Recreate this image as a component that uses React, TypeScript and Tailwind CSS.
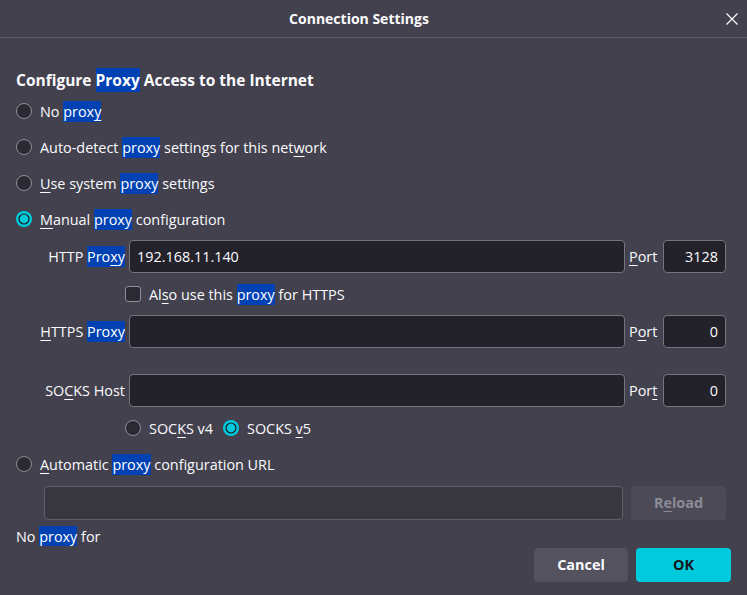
import React from 'react';

const ACCENT = '#00cadb';

function Hl({ children }: { children: React.ReactNode }) {
  return <span className="bg-[#0042b4] py-[1px] text-white">{children}</span>;
}

function Key({ children }: { children: React.ReactNode }) {
  return <span className="underline decoration-1 underline-offset-[3px]">{children}</span>;
}

function Radio({ checked }: { checked?: boolean }) {
  return (
    <svg width="16" height="16" viewBox="0 0 16 16" className="shrink-0">
      {checked ? (
        <>
          <circle cx="8" cy="8" r="8" fill={ACCENT} />
          <circle cx="8" cy="8" r="5.6" fill="#1c1b22" />
          <circle cx="8" cy="8" r="4.4" fill={ACCENT} />
        </>
      ) : (
        <circle cx="8" cy="8" r="7.5" fill="#2b2a33" stroke="#8f8f9d" strokeWidth="1" />
      )}
    </svg>
  );
}

function RadioRow({ checked, children }: { checked?: boolean; children: React.ReactNode }) {
  return (
    <div className="flex h-[36px] items-center gap-2">
      <Radio checked={checked} />
      <span className="pt-[2px]">{children}</span>
    </div>
  );
}

function TextBox({ value, className = '' }: { value?: string; className?: string }) {
  return (
    <div
      className={`flex h-[33px] items-center rounded-[4px] border border-[#74737e] bg-[#23222b] px-[7px] ${className}`}
    >
      {value}
    </div>
  );
}

function ProxyRow({
  label,
  value,
  port,
  portLabel,
}: {
  label: React.ReactNode;
  value?: string;
  port: string;
  portLabel: React.ReactNode;
}) {
  return (
    <div className="flex h-[33px] items-center">
      <div className="w-[113px] shrink-0 whitespace-nowrap pr-[4px] text-right">{label}</div>
      <TextBox value={value} className="flex-1" />
      <div className="w-[38px] shrink-0 pl-[4px]">{portLabel}</div>
      <TextBox value={port} className="w-[63px] shrink-0 justify-end" />
    </div>
  );
}

export default function App() {
  return (
    <div className="flex h-[595px] w-[747px] flex-col overflow-hidden bg-[#42414d] font-['Open_Sans','Noto_Sans',sans-serif] text-[14.4px] text-[#fbfbfe]">
      <div className="flex h-[38px] shrink-0 items-center border-b border-[#5e5d69]">
        <div className="flex-1 text-center text-[14px] font-bold">Connection Settings</div>
        <button className="mr-[1px] flex h-[30px] w-[28px] items-center justify-center">
          <svg width="12" height="12" viewBox="0 0 12 12">
            <path d="M0.5 0.5 L11.5 11.5 M11.5 0.5 L0.5 11.5" stroke="#fbfbfe" strokeWidth="1.2" />
          </svg>
        </button>
      </div>

      <div className="flex-1 overflow-hidden pl-[16px] pr-[21px]">
        <div className="mt-[31px] flex h-[24px] items-center whitespace-nowrap text-[15.5px] font-bold">
          <span>
            Configure <Hl>Proxy</Hl> Access to the Internet
          </span>
        </div>
        <div>
          <RadioRow>
            No <Hl>prox<Key>y</Key></Hl>
          </RadioRow>
          <RadioRow>
            Auto-detect <Hl>proxy</Hl> settings for this net<Key>w</Key>ork
          </RadioRow>
          <RadioRow>
            <Key>U</Key>se system <Hl>proxy</Hl> settings
          </RadioRow>
          <RadioRow checked>
            <Key>M</Key>anual <Hl>proxy</Hl> configuration
          </RadioRow>
        </div>

        <div className="mt-[3px]">
          <ProxyRow
            label={
              <>
                HTTP <Hl>Pro<Key>x</Key>y</Hl>
              </>
            }
            value="192.168.11.140"
            port="3128"
            portLabel={
              <>
                <Key>P</Key>ort
              </>
            }
          />
        </div>

        <div className="flex h-[42px] items-center gap-2 pl-[109px]">
          <span className="h-[16px] w-[16px] shrink-0 rounded-[3px] border border-[#8f8f9d] bg-[#2b2a33]" />
          <span className="pt-[2px]">
            Al<Key>s</Key>o use this <Hl>proxy</Hl> for HTTPS
          </span>
        </div>

        <ProxyRow
          label={
            <>
              <Key>H</Key>TTPS <Hl>Proxy</Hl>
            </>
          }
          port="0"
          portLabel={
            <>
              P<Key>o</Key>rt
            </>
          }
        />

        <div className="mt-[26px]">
          <ProxyRow
            label={
              <>
                SO<Key>C</Key>KS Host
              </>
            }
            port="0"
            portLabel={
              <>
                Por<Key>t</Key>
              </>
            }
          />
        </div>

        <div className="mt-[3px] flex h-[36px] items-center pl-[109px]">
          <div className="flex items-center gap-2">
            <Radio />
            <span className="pt-[2px]">
              SOC<Key>K</Key>S v4
            </span>
          </div>
          <div className="ml-[10px] flex items-center gap-2">
            <Radio checked />
            <span className="pt-[2px]">
              SOCKS <Key>v</Key>5
            </span>
          </div>
        </div>

        <RadioRow>
          <Key>A</Key>utomatic <Hl>proxy</Hl> configuration URL
        </RadioRow>

        <div className="mt-[4px] flex h-[34px] items-stretch pl-[28px]">
          <div className="flex-1 rounded-[4px] border border-[#5f5e69] bg-[#38373f]" />
          <button className="ml-[8px] w-[95px] rounded-[4px] bg-[#4b4a56] font-bold text-[#8c8b96]">
            R<Key>e</Key>load
          </button>
        </div>

        <div className="mt-[8px] flex h-[18px] items-center">
          <span>
            No <Hl>proxy</Hl> for
          </span>
        </div>
      </div>

      <div className="flex h-[49px] shrink-0 items-start justify-end gap-[8px] pr-[16px] pt-[2px]">
        <button className="h-[34px] w-[94px] rounded-[4px] bg-[#53525e] font-bold text-[#fbfbfe]">
          Cancel
        </button>
        <button className="h-[34px] w-[95px] rounded-[4px] bg-[#00cadb] font-bold text-[#15141a]">
          OK
        </button>
      </div>
    </div>
  );
}
